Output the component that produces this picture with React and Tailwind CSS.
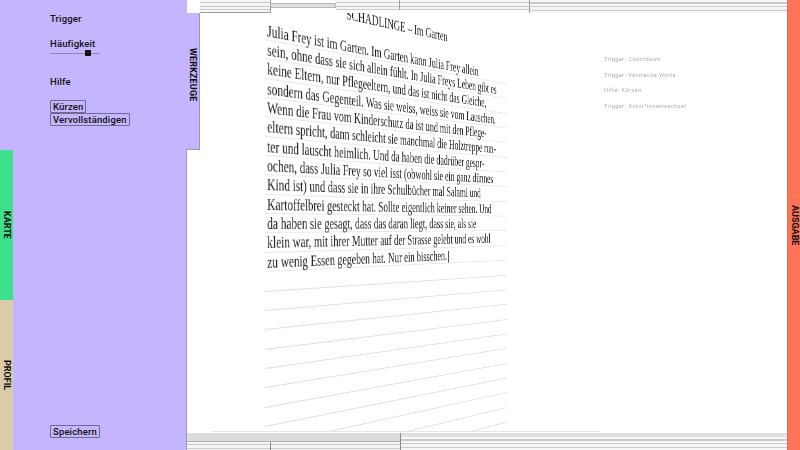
import React from 'react';

const lines = [
  'Julia Frey ist im Garten. Im Garten kann Julia Frey allein',
  'sein, ohne dass sie sich allein fühlt. In Julia Freys Leben gibt es',
  'keine Eltern, nur Pflegeeltern, und das ist nicht das Gleiche,',
  'sondern das Gegenteil. Was sie weiss, weiss sie vom Lauschen.',
  'Wenn die Frau vom Kinderschutz da ist und mit den Pflege-',
  'eltern spricht, dann schleicht sie manchmal die Holztreppe run-',
  'ter und lauscht heimlich. Und da haben die dadrüber gespr-',
  'ochen, dass Julia Frey so viel isst (obwohl sie ein ganz dünnes',
  'Kind ist) und dass sie in ihre Schulbücher mal Salami und',
  'Kartoffelbrei gesteckt hat. Sollte eigentlich keiner sehen. Und',
  'da haben sie gesagt, dass das daran liegt, dass sie, als sie',
  'klein war, mit ihrer Mutter auf der Strasse gelebt und es wohl',
  'zu wenig Essen gegeben hat. Nur ein bisschen.',
];

const notes = ['Trigger: Countdown', 'Trigger: Verstecke Worte', 'Hilfe: Kürzen', 'Trigger: Autor*innenwechsel'];

const ruled = 'bg-[repeating-linear-gradient(to_bottom,#f6f6f6_0,#f6f6f6_2.5px,#cacaca_2.5px,#cacaca_3.5px)]';

const Tab = ({ label, className }) => (
  <div className={`flex items-center justify-center ${className}`}>
    <span className="[writing-mode:vertical-rl] text-[9px] font-bold leading-none text-[#111]">{label}</span>
  </div>
);

const Btn = ({ children }) => (
  <button className="block h-[13px] rounded-[1px] border border-[#6f6a94] px-[2px] text-[9.5px] font-medium leading-[11px] tracking-[0.015em] text-[#111]">
    {children}
  </button>
);

const Page = () => (
  <div className="-mt-[31.35px] ml-[78px] h-[522.5px] w-[450px] shrink-0 origin-[0_242.35px] font-['Liberation_Serif',serif] text-[16.6px] text-[#1c1c1c] [transform:perspective(1007px)_rotateY(45deg)]">
    <div className="h-[38.7px] pr-[10px] text-center leading-[27px] whitespace-nowrap">SCHADLINGE – Im Garten</div>
    {lines.map((l, i) => (
      <div key={i} className="h-[19.35px] whitespace-nowrap border-b border-[#e8e8e8] pl-[3px] leading-[20px]">
        {l}
        {i === 12 && <span className="ml-[3px] inline-block h-[14px] w-px bg-[#333] align-middle" />}
      </div>
    ))}
    {Array.from({ length: 12 }).map((_, i) => (
      <div key={i} className="h-[19.35px] border-b border-[#dedede]" />
    ))}
  </div>
);

export default function App() {
  return (
    <div className="flex h-[450px] w-[800px] overflow-hidden bg-white font-['Roboto',sans-serif]">
      <div className="flex w-[13px] shrink-0 flex-col">
        <div className="h-[150px] bg-[#c4b5fd]" />
        <Tab label="KARTE" className="h-[150px] bg-[#3fe08c]" />
        <Tab label="PROFIL" className="h-[150px] bg-[#dccba8]" />
      </div>

      <div className="relative z-10 flex w-[174px] shrink-0 flex-col border-r border-[#9d95bd] bg-[#c4b5fd] pb-[12px] pl-[37px] pt-[13px] text-[9.5px] font-medium tracking-[0.015em] text-[#111]">
        <div className="leading-[12px]">Trigger</div>
        <div className="mt-[13px] leading-[12px]">Häufigkeit</div>
        <div className="relative h-[6px] w-[50px]">
          <div className="mt-[3px] h-px bg-[#8f88ab]" />
          <div className="absolute left-[35px] top-0 h-[6px] w-[6px] bg-[#111]" />
        </div>
        <div className="mt-[20px] leading-[12px]">Hilfe</div>
        <div className="mt-[12px] flex flex-col items-start">
          <Btn>Kürzen</Btn>
          <Btn>Vervollständigen</Btn>
        </div>
        <div className="mt-auto">
          <Btn>Speichern</Btn>
        </div>

        <Tab label="WERKZEUGE" className="absolute left-full top-0 h-[150px] w-[14px] border-b border-r border-[#9d95bd] bg-[#c4b5fd]" />
      </div>

      <div className="flex min-w-0 flex-1 flex-col">
        <div className="relative z-10 flex h-[13px] shrink-0 bg-white pl-[13px]">
          <div className={`h-[13px] w-[71px] border-b border-r border-[#a0a0a0] ${ruled}`} />
          <div className="mt-[3px] h-[5px] w-[65px] border-y border-r border-[#b8b8b8] bg-[#dedede]" />
          <div className={`h-[10px] w-[64px] border-r border-[#a0a0a0] ${ruled}`} />
          <div className={`h-[10px] w-[129px] ${ruled}`} />
          <div className={`h-[13px] flex-1 border-l border-[#a0a0a0] ${ruled}`} />
        </div>

        <div className="flex min-h-0 flex-1">
          <Page />
          <div className="ml-[-111px] mt-[43px] flex flex-col gap-[9.5px] text-[5.5px] leading-[6px] tracking-[0.09em] text-[#a9a9a9] will-change-transform">
            {notes.map((n) => (
              <div key={n} className="whitespace-nowrap">{n}</div>
            ))}
          </div>
        </div>

        <div className="relative z-10 flex h-[19px] shrink-0 flex-col bg-white">
          <div className="ml-[25px] h-[2px] w-[388px] border-t border-[#e6e6e6]" />
          <div className="flex flex-1">
            <div className="flex w-[213px] flex-col">
              <div className="h-[8px] bg-[#dcdcdc]" />
              <div className="flex flex-1 border-t border-[#b0b0b0]">
                <div className={`w-[84px] border-r border-[#8a8a8a] ${ruled}`} />
                <div className={`flex-1 ${ruled}`} />
              </div>
            </div>
            <div className="flex flex-1 flex-col border-l border-[#8a8a8a]">
              <div className="h-[4px] bg-[#e0e0e0]" />
              <div className={`flex-1 ${ruled}`} />
            </div>
          </div>
        </div>
      </div>

      <Tab label="AUSGABE" className="w-[13px] shrink-0 border-l border-[#d8705c] bg-[#ff7357]" />
    </div>
  );
}
